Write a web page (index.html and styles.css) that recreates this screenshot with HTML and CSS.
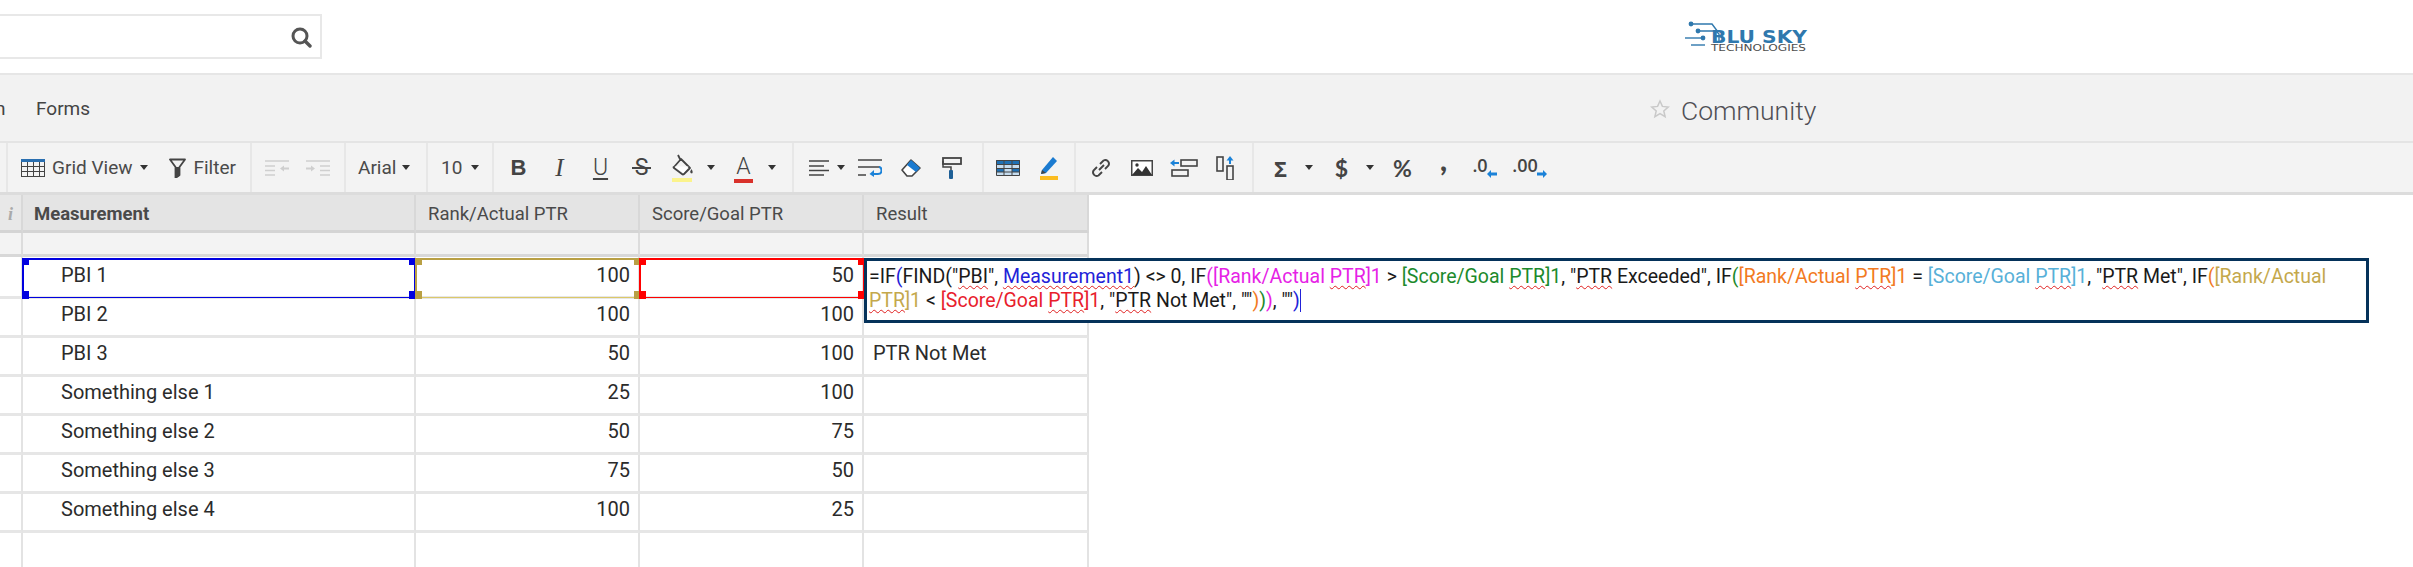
FILE: index.html
```html
<!DOCTYPE html>
<html lang="en">
<head>
<meta charset="utf-8">
<title>Community</title>
<link rel="stylesheet" href="styles.css">
</head>
<body>
<header class="top">
  <div class="search">
    <svg width="22" height="22" viewBox="0 0 22 22"><circle cx="10" cy="10" r="7" fill="none" stroke="#555" stroke-width="3"/><path d="M15 15l5 5" stroke="#555" stroke-width="3.4" stroke-linecap="round"/></svg>
  </div>
  <svg class="logo" width="130" height="36" viewBox="0 0 130 36">
    <g stroke="#2f78ad" stroke-width="1.4" fill="none"><path d="M7 5h21l6 8"/><path d="M14 12h18l3 3v9"/><path d="M1 19h18"/><path d="M7 26h14"/></g>
    <g fill="#2f78ad"><circle cx="7" cy="5" r="2.4"/><circle cx="14" cy="12" r="2.4"/><circle cx="19" cy="19" r="2.4"/></g>
    <text class="logo-a" x="27" y="23.500" textLength="96" lengthAdjust="spacingAndGlyphs">BLU SKY</text>
    <text class="logo-b" x="27" y="32" textLength="95" lengthAdjust="spacingAndGlyphs">TECHNOLOGIES</text>
  </svg>
</header>

<nav class="nav">
  <span class="cut">n</span>
  <span class="forms">Forms</span>
  <svg class="star" width="20" height="20" viewBox="0 0 20 20"><path d="M10 2l2.4 5.4 5.8.6-4.4 3.9 1.3 5.8-5.1-3-5.1 3 1.3-5.8L1.8 8l5.8-.6z" fill="none" stroke="#c9c9c9" stroke-width="1.5"/></svg>
  <span class="sheet">Community</span>
</nav>

<div class="toolbar">
  <div class="grp g1"></div>
  <div class="grp g2">
    <svg width="24" height="18" viewBox="0 0 24 18"><rect x=".5" y=".5" width="23" height="17" fill="#f3f3f3" stroke="#444"/><rect width="24" height="3" fill="#2a6fb0"/><path d="M0 7.5h24M0 12.5h24M6.5 3v15M12.5 3v15M18.5 3v15" stroke="#444"/></svg>
    <span class="lbl grid-lbl">Grid View</span><i class="caret c-grid"></i>
    <svg class="funnel" width="17" height="20" viewBox="0 0 17 20"><path d="M1 1.5h15L10.500 9v8l-4 3V9z" fill="#f3f3f3" stroke="#444" stroke-width="1.8" stroke-linejoin="round"/><path d="M6.500 9h4v9l-4 2z" fill="#444"/></svg>
    <span class="lbl filter-lbl">Filter</span>
  </div>
  <div class="grp g3">
    <svg width="24" height="16" viewBox="0 0 24 16"><path d="M0 1h24M0 6h10M0 10.500h10M0 15h10" stroke="#cfcfcf" stroke-width="1.500"/><path d="M15 8.500l4-3v2h5v2h-5v2z" fill="#cfcfcf"/></svg>
    <svg class="ind2" width="24" height="16" viewBox="0 0 24 16"><path d="M0 1h24M14 6h10M14 10.500h10M14 15h10" stroke="#cfcfcf" stroke-width="1.500"/><path d="M9 8.500l-4-3v2H0v2h5v2z" fill="#cfcfcf"/></svg>
  </div>
  <div class="grp g4"><span class="lbl">Arial</span><i class="caret c-sel"></i></div>
  <div class="grp g5"><span class="lbl">10</span><i class="caret c-size"></i></div>
  <div class="grp g6">
    <span class="ic fmt bold">B</span>
    <span class="ic fmt ital">I</span>
    <span class="ic fmt und">U</span>
    <span class="ic fmt strike">S</span>
    <span class="ic"><svg width="22" height="28" viewBox="0 0 22 28"><path d="M6 1l2 4M2 13l7-8 9 9-6 6q-1 1-2 0l-8-6q-1-1 0-1z" fill="none" stroke="#444" stroke-width="1.800" stroke-linejoin="round"/><path d="M2.500 12.500h14l-5 6.500z" fill="#fff"/><path d="M19.500 15q2 3 .5 4.500-2 0-1.800-2z" fill="#444"/><rect x="0" y="24" width="20" height="4" fill="#fbf38c"/></svg></span>
    <i class="caret slot"></i>
    <span class="ic m4"><span class="font-a">A</span></span>
    <i class="caret slot"></i>
  </div>
  <div class="grp g7">
    <span class="ic"><svg width="20" height="16" viewBox="0 0 20 16"><path d="M0 1h20M0 6h15M0 10.500h20M0 15h15" stroke="#444" stroke-width="1.500"/></svg></span>
    <i class="caret slot tight"></i>
    <span class="ic m4"><svg width="24" height="18" viewBox="0 0 24 18"><path d="M0 1h24M0 8h22M0 16h8" stroke="#444" stroke-width="1.500"/><path d="M21 8q2.500 0 2.500 3.500T20 15h-6" fill="none" stroke="#1b82d8" stroke-width="2"/><path d="M16 11l-4.500 4 4.500 3z" fill="#1b82d8"/></svg></span>
    <span class="ic"><svg width="22" height="20" viewBox="0 0 22 20"><path d="M2 12l9-10 9 8-8 8H7z" fill="#fff" stroke="#444" stroke-width="1.600" stroke-linejoin="round"/><path d="M7 7l4-5 9 8-4 4z" fill="#1b7bd0"/></svg></span>
    <span class="ic"><svg width="20" height="22" viewBox="0 0 20 22"><rect x="1" y="1" width="18" height="6" fill="none" stroke="#444" stroke-width="1.800"/><path d="M1 4v6h8v3" fill="none" stroke="#444" stroke-width="1.500"/><rect x="7" y="13" width="4" height="9" rx="1" fill="#1e5f96"/></svg></span>
  </div>
  <div class="grp g8">
    <span class="ic"><svg width="24" height="16" viewBox="0 0 24 16"><rect width="24" height="16" fill="#c5dcef"/><rect width="24" height="4" fill="#1e70b4"/><rect y="8" width="8" height="4" fill="#1e70b4"/><rect x="16" y="8" width="8" height="4" fill="#1e70b4"/><path d="M.5.500h23v15H.5zM0 4.500h24M0 8.500h24M0 12h24M8 0v16M16 0v16" fill="none" stroke="#444"/></svg></span>
    <span class="ic"><svg width="20" height="26" viewBox="0 0 20 26"><path d="M3 15L14 2l4 4L7 18l-5 1z" fill="#1b7bd0"/><path d="M3 15l4 3-5 1z" fill="#444"/><rect x="1" y="21" width="18" height="4" fill="#fbbc20"/></svg></span>
  </div>
  <div class="grp g9">
    <span class="ic wide"><svg width="20" height="20" viewBox="0 0 20 20" fill="none" stroke="#444" stroke-width="1.900"><path d="M8 12l5-5"/><path d="M6 9l-3.500 3.500a3.700 3.700 0 0 0 5 5L11 14"/><path d="M9 6l3.500-3.500a3.700 3.700 0 0 1 5 5L14 11"/></svg></span>
    <span class="ic wide"><svg width="22" height="16" viewBox="0 0 22 16"><rect x=".75" y=".75" width="20.500" height="14.500" fill="#fff" stroke="#444" stroke-width="1.500"/><path d="M1 15l6-7 4 4 4-6 6 9z" fill="#333"/><circle cx="6" cy="5" r="1.700" fill="#333"/></svg></span>
    <span class="ic wide"><svg width="28" height="18" viewBox="0 0 28 18" fill="none"><rect x="11" y="1" width="16" height="6" stroke="#444" stroke-width="1.600"/><rect x="2" y="11" width="16" height="6" stroke="#444" stroke-width="1.600"/><path d="M9 4H2" stroke="#1b82d8" stroke-width="2"/><path d="M4.500 0.500L0 4l4.500 3.500z" fill="#1b82d8"/></svg></span>
    <span class="ic wide"><svg width="18" height="24" viewBox="0 0 18 24" fill="none"><rect x="1" y="1" width="6" height="14" stroke="#444" stroke-width="1.600"/><rect x="11" y="10" width="6" height="14" stroke="#444" stroke-width="1.600"/><path d="M14 8V2" stroke="#1b82d8" stroke-width="2"/><path d="M10.500 4.500L14 0l3.500 4.500z" fill="#1b82d8"/></svg></span>
  </div>
  <div class="grp g10">
    <span class="ic sym sigma">Σ</span>
    <i class="caret slot c-m2"></i>
    <span class="ic sym m4">$</span>
    <i class="caret slot c-m-n"></i>
    <span class="ic sym m4">%</span>
    <span class="ic sym comma">,</span>
    <span class="ic dec"><span>.0</span><svg width="10" height="8" viewBox="0 0 10 8"><path d="M4 0L0 4l4 4V5.500h6v-3H4z" fill="#1b82d8"/></svg></span>
    <span class="ic dec m4"><span>.00</span><svg width="10" height="8" viewBox="0 0 10 8"><path d="M6 0l4 4-4 4V5.500H0v-3h6z" fill="#1b82d8"/></svg></span>
  </div>
</div>

<main class="sheet-wrap">
  <div class="grid">
    <div class="hd idx"><em>i</em></div><div class="hd pri">Measurement</div><div class="hd">Rank/Actual PTR</div><div class="hd">Score/Goal PTR</div><div class="hd">Result</div>
    <div class="sub"></div><div class="sub"></div><div class="sub"></div><div class="sub"></div><div class="sub"></div>

    <div class="c first"></div><div class="c first name">PBI 1</div><div class="c first num">100</div><div class="c first num">50</div><div class="c first"></div>
    <div class="c"></div><div class="c name">PBI 2</div><div class="c num">100</div><div class="c num">100</div><div class="c txt"></div>
    <div class="c"></div><div class="c name">PBI 3</div><div class="c num">50</div><div class="c num">100</div><div class="c txt">PTR Not Met</div>
    <div class="c"></div><div class="c name">Something else 1</div><div class="c num">25</div><div class="c num">100</div><div class="c txt"></div>
    <div class="c"></div><div class="c name">Something else 2</div><div class="c num">50</div><div class="c num">75</div><div class="c txt"></div>
    <div class="c"></div><div class="c name">Something else 3</div><div class="c num">75</div><div class="c num">50</div><div class="c txt"></div>
    <div class="c"></div><div class="c name">Something else 4</div><div class="c num">100</div><div class="c num">25</div><div class="c txt"></div>
    <div class="c"></div><div class="c"></div><div class="c"></div><div class="c"></div><div class="c"></div>
  </div>

  <div class="sel sel-blue"><b class="h tl"></b><b class="h tr"></b><b class="h bl"></b><b class="h br"></b></div>
  <div class="sel sel-gold"><b class="h tl"></b><b class="h tr"></b><b class="h bl"></b><b class="h br"></b></div>
  <div class="sel sel-red"><b class="h tl"></b><b class="h tr"></b><b class="h bl"></b><b class="h br"></b></div>

  <div class="editor">=IF<span class="k-blue">(</span>FIND("<span class="sp">PBI</span>", <span class="k-blue"><span class="sp">Measurement1</span></span>) &lt;&gt; 0, IF<span class="k-mag">([Rank/Actual <span class="sp">PTR</span>]1</span> &gt; <span class="k-green">[Score/Goal <span class="sp">PTR</span>]1</span>, "<span class="sp">PTR</span> Exceeded", IF<span class="k-green">(</span><span class="k-org">[Rank/Actual <span class="sp">PTR</span>]1</span> = <span class="k-sky">[Score/Goal <span class="sp">PTR</span>]1</span>, "<span class="sp">PTR</span> Met", IF<span class="k-org">(</span><span class="k-gold">[Rank/Actual</span><br><span class="k-gold"><span class="sp">PTR</span>]1</span> &lt; <span class="k-red">[Score/Goal <span class="sp">PTR</span>]1</span>, "<span class="sp">PTR</span> Not Met", ""<span class="k-org">)</span><span class="k-green">)</span><span class="k-mag">)</span>, ""<span class="k-blue cursor">)</span></div>
</main>
</body>
</html>
```
FILE: styles.css
```css
* { box-sizing: border-box; }
html, body { margin: 0; height: 567px; overflow: hidden; background: #fff; }
body { font-family: Roboto, "Liberation Sans", sans-serif; color: #444; }

.top { height: 75px; border-bottom: 2px solid #e6e6e6; display: flex; padding-top: 14px; }
.search { width: 322px; height: 45px; border: 2px solid #e8e8e8; border-left: 0; display: flex; justify-content: flex-end; align-items: center; padding-right: 8px; }
.logo { margin-left: 1362px; margin-top: 5px; flex: none; }
.logo-a { font: bold 18px "DejaVu Sans", sans-serif; fill: #2f78ad; }
.logo-b { font: 9.5px "DejaVu Sans", sans-serif; fill: #4d4d4d; }

.nav { height: 66px; background: #f2f2f2; display: flex; align-items: center; font-size: 19px; white-space: nowrap; }
.cut { margin-left: -5px; width: 11px; }
.forms { margin-left: 30px; width: 54px; margin-top: 1px; }
.star { margin-left: 1560px; flex: none; margin-top: 2px; }
.sheet { margin-left: 11px; font-size: 26.500px; font-weight: 300; color: #4f4f55; margin-top: 5px; }

.toolbar { height: 54px; background: #f3f3f3; border-top: 2px solid #e4e4e4; border-bottom: 3px solid #dcdcdc; display: flex; }
.grp { flex: none; height: 100%; border-left: 2px solid #e7e7e7; display: flex; align-items: center; white-space: nowrap; font-size: 19px; }
.g1 { width: 6px; border-left: 0; }
.g2 { width: 244px; padding-left: 13px; }
.g3 { width: 94px; padding-left: 13px; }
.g4 { width: 82px; padding-left: 12px; }
.g5 { width: 66px; padding-left: 13px; }
.g6 { width: 300px; padding-left: 4px; }
.g7 { width: 190px; padding-left: 4px; }
.g8 { width: 92px; padding-left: 3px; }
.g9 { width: 178px; padding-left: 4px; }
.g10 { flex: 1; padding-left: 6px; }
.lbl { color: #4a4a4a; }
.grid-lbl { margin-left: 7px; }
.funnel { margin-left: 21px; }
.filter-lbl { margin-left: 8px; }
.ind2 { margin-left: 17px; }

.caret { flex: none; display: block; width: 0; height: 0; border-left: 4px solid transparent; border-right: 4px solid transparent; border-top: 5px solid #333; }
.c-grid { margin-left: 7px; }
.c-sel { margin-left: 6px; }
.c-size { margin-left: 9px; }
.caret.slot { margin-left: 4px; margin-right: 4px; }
.caret.tight { margin-left: -2px; margin-right: 0; }
.c-m2 { margin-left: 6px; }
.c-m-n { margin-right: 0; }

.ic { flex: none; width: 41px; height: 100%; display: flex; align-items: center; justify-content: center; color: #444; }
.ic.wide { width: 41.5px; }
.m4 { margin-left: 4px; }
.fmt { font-size: 21px; }
.bold { font-weight: 900; font-family: "Liberation Sans", sans-serif; font-size: 22px; }
.ital { font-family: "Liberation Serif", serif; font-style: italic; font-size: 25px; font-weight: 400; }
.und { text-decoration: underline; text-underline-offset: 3px; font-weight: 300; font-size: 23px; }
.strike { position: relative; font-weight: 400; font-size: 23px; }
.strike::after { content: ""; position: absolute; left: 11px; right: 11px; top: 24px; height: 2px; background: #444; }
.font-a { font-size: 23px; line-height: 25px; border-bottom: 4px solid #d9312b; padding: 0 2px; color: #444; font-weight: 300; margin-top: 2px; }
.sym { font-family: Lato, sans-serif; font-size: 23px; font-weight: 700; }
.sigma { font-family: "Open Sans", sans-serif; font-size: 22px; }
.comma { font-size: 30px; font-weight: 900; padding-bottom: 17px; }
.dec { font-family: "Open Sans", sans-serif; font-size: 18px; font-weight: 600; padding-bottom: 5px; }
.dec svg { margin-top: 18px; margin-left: -1px; }

.sheet-wrap { position: relative; height: 372px; }
.grid { display: grid; width: 1089px; grid-template-columns: 23px 393px 224px 224px 225px; grid-auto-rows: 39px; grid-template-rows: 38px 24px 42px; }
.hd { background: #e4e4e4; border-right: 2px solid #d8d8d8; border-bottom: 3px solid #d4d4d4; font-size: 18.500px; line-height: 38px; padding-left: 12px; color: #4a4a4a; }
.hd.pri { font-weight: 700; padding-left: 11px; }
.idx { padding: 0; text-align: center; background: #e8e8e8; }
.idx em { font: italic bold 18px "Liberation Serif", serif; color: #aaa; }
.sub { background: #f3f3f3; border-right: 2px solid #dcdcdc; border-bottom: 3px solid #d8d8d8; }
.c { border-right: 2px solid #e3e3e3; border-bottom: 3px solid #e6e6e6; font-size: 20px; line-height: 30px; color: #2b2b2b; }
.c.first { padding-top: 3px; }
.name { padding-left: 38px; }
.num { text-align: right; padding-right: 8px; }
.txt { padding-left: 9px; }

.sel { position: absolute; border-style: solid; border-width: 2px 2px 1.500px 2px; top: 63px; height: 40px; }
.sel-blue { left: 22px; width: 394px; border-color: #0000e0; }
.sel-gold { left: 415px; width: 226px; border-color: #b9a044; border-bottom-color: #dcc868; }
.sel-red { left: 639px; width: 226px; border-color: #f00; }
.h { position: absolute; width: 7px; height: 7px; background: #0000e0; }
.sel-gold .h { background: #b9a044; }
.sel-red .h { background: #f00; }
.tl { left: -2px; top: -1px; height: 6px; }
.tr { right: -2px; top: -1px; height: 6px; }
.bl { left: -2px; bottom: -2px; height: 8px; }
.br { right: -2px; bottom: -2px; height: 8px; }

.editor { position: absolute; left: 864px; top: 63px; width: 1505px; height: 65px; border: 3px solid #05325a; background: #fff; padding: 4px 2px 0; font-size: 19.500px; line-height: 24px; color: #1a1a1a; white-space: nowrap; }
.sp { text-decoration: underline wavy #e02020 1px; text-underline-offset: 2px; }
.k-blue { color: #2222d8; }
.k-mag { color: #e622e6; }
.k-green { color: #1c8a2c; }
.k-org { color: #f27a22; }
.k-sky { color: #57b0d8; }
.k-gold { color: #c4a84c; }
.k-red { color: #e8202c; }
.cursor { border-right: 1px solid #2222d8; }
```
